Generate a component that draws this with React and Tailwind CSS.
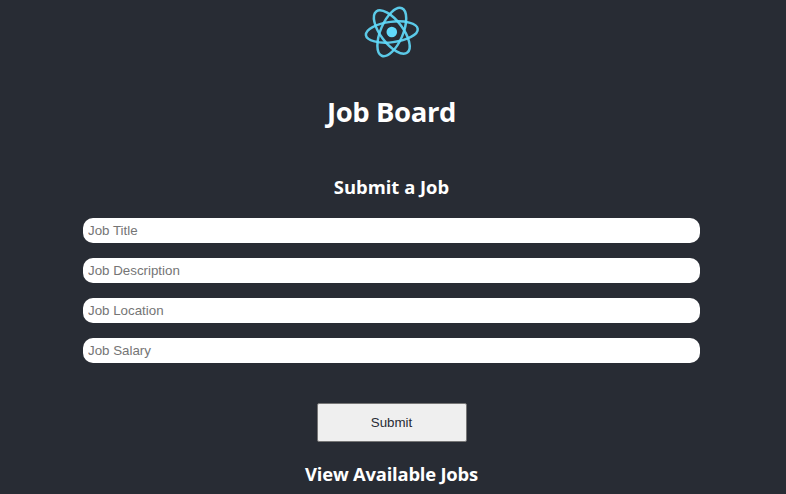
const fields = ["Job Title", "Job Description", "Job Location", "Job Salary"];

function Logo() {
  return (
    <svg className="h-[64px] w-[64px] shrink-0" viewBox="-32 -32 64 64" fill="none" stroke="#61dafb">
      <circle r="5.3" cx="-0.2" fill="#61dafb" stroke="none" />
      <g strokeWidth="2.5" strokeOpacity="0.9" transform="translate(-0.2 0) rotate(-7)">
        <ellipse rx="26.1" ry="10.2" />
        <ellipse rx="25.8" ry="11.2" transform="rotate(60)" />
        <ellipse rx="25.8" ry="11.2" transform="rotate(120)" />
      </g>
    </svg>
  );
}

export default function App() {
  return (
    <div className="flex h-[494px] w-[786px] flex-col items-center overflow-hidden bg-[#282c34] pr-[3px] font-['Open_Sans',sans-serif] text-white">
      <Logo />
      <h1 className="mt-[28px] h-[40px] text-[27.5px] leading-[40px] font-bold whitespace-nowrap tracking-[-0.4px]">Job Board</h1>
      <h2 className="mt-[42px] h-[26px] text-[18.4px] leading-[26px] font-bold whitespace-nowrap">Submit a Job</h2>
      <form className="mt-[18px] flex flex-col items-center font-['Liberation_Sans',Arial,sans-serif] text-[13.333px]">
        <div className="flex flex-col gap-[15px]">
          {fields.map((name) => (
            <input
              key={name}
              placeholder={name}
              className="h-[25px] w-[617px] rounded-[10px] bg-white px-[5px] text-black placeholder:text-[#757575]"
            />
          ))}
        </div>
        <button type="button" className="mt-[40px] h-[39px] w-[150px] rounded-[2px] border border-[#767676] bg-[#efefef] text-[#282c34]">
          Submit
        </button>
      </form>
      <h2 className="mt-[19px] h-[26px] shrink-0 text-[18.4px] leading-[26px] font-bold whitespace-nowrap tracking-[-0.2px]">View Available Jobs</h2>
    </div>
  );
}
